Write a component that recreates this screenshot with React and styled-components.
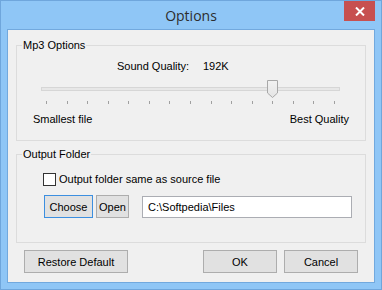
import styled, { createGlobalStyle } from "styled-components";

const Global = createGlobalStyle`
  html, body { margin: 0; padding: 0; background: #8fc6f6; }
  body { font-family: "Segoe UI", "Liberation Sans", Arial, sans-serif; }
`;

const Window = styled.div`
  width: 382px;
  height: 290px;
  box-sizing: border-box;
  background: #8fc6f6;
  border: 1px solid #6fa6dc;
  display: flex;
  flex-direction: column;
  padding: 0 6px 6px;
  overflow: hidden;
`;

const TitleBar = styled.div`
  height: 28px;
  display: flex;
  align-items: center;
  justify-content: center;
  position: relative;
  font-family: "Open Sans", "Noto Sans", sans-serif;
  font-size: 14px;
  color: #2d2d2d;
`;

const CloseBtn = styled.div`
  position: absolute;
  top: 0;
  right: 0;
  width: 31px;
  height: 20px;
  background: #c75050;
  display: flex;
  align-items: center;
  justify-content: center;
`;

const Client = styled.div`
  flex: 1;
  background: #f0f0f0;
  border: 1px solid #72a9de;
  padding: 7px 8px 0;
  display: flex;
  flex-direction: column;
  font-family: "Liberation Sans", Arial, sans-serif;
  font-size: 11px;
  color: #000;
`;

const Group = styled.fieldset`
  margin: ${(p) => p.$top || 0}px 0 0;
  padding: 0 0 ${(p) => p.$bottom || 0}px;
  border: 1px solid #dcdcdc;
  min-width: 0;
`;

const Legend = styled.legend`
  margin-left: 5px;
  padding: 0 1px;
  line-height: 16px;
`;

const QualityRow = styled.div`
  display: flex;
  line-height: 16px;
  margin-top: 5px;
  padding-left: 100px;
`;

const QualityLabel = styled.span`
  width: 86px;
`;

const Slider = styled.div`
  position: relative;
  margin: 6px 25px 0 24px;
  height: 24px;
`;

const Track = styled.div`
  position: absolute;
  left: 0;
  right: 0;
  top: 7px;
  height: 2px;
  background: #e7e7e7;
  border: 1px solid #d6d6d6;
`;

const Thumb = styled.svg`
  position: absolute;
  top: 0;
  left: ${(p) => p.$left}px;
`;

const Ticks = styled.div`
  position: absolute;
  left: 5px;
  right: 5px;
  top: 21px;
  display: flex;
  justify-content: space-between;
`;

const Tick = styled.span`
  width: 1px;
  height: 3px;
  background: #a0a0a0;
`;

const ScaleLabels = styled.div`
  display: flex;
  justify-content: space-between;
  line-height: 16px;
  margin-top: 7px;
  padding: 0 16px;
`;

const CheckRow = styled.label`
  display: flex;
  align-items: center;
  gap: 3px;
  line-height: 16px;
  margin-top: 9px;
  padding-left: 26px;
`;

const Box = styled.span`
  width: 11px;
  height: 11px;
  border: 1px solid #333;
  background: #fff;
`;

const FolderRow = styled.div`
  display: flex;
  align-items: flex-start;
  margin-top: 8px;
  padding-left: 27px;
`;

const Button = styled.button`
  box-sizing: border-box;
  height: 23px;
  width: ${(p) => p.$w}px;
  margin-left: ${(p) => p.$ml || 0}px;
  padding: 0;
  font: inherit;
  color: #000;
  background: #e1e1e1;
  border: 1px solid ${(p) => (p.$focus ? "#3c8fe0" : "#adadad")};
`;

const PathInput = styled.div`
  box-sizing: border-box;
  height: 22px;
  width: 210px;
  margin: 1px 0 0 13px;
  background: #fff;
  border: 1px solid #abadb3;
  padding: 0 5px;
  line-height: 20px;
`;

const Footer = styled.div`
  display: flex;
  margin-top: 7px;
  padding: 0 8px;
`;

const Spacer = styled.div`
  flex: 1;
`;

export default function App() {
  const ticks = Array.from({ length: 15 });
  return (
    <>
      <Global />
      <Window>
        <TitleBar>
          Options
          <CloseBtn>
            <svg width="10" height="9" viewBox="0 0 10 9">
              <path d="M1 0.5 L9 8.5 M9 0.5 L1 8.5" stroke="#fff" strokeWidth="2" />
            </svg>
          </CloseBtn>
        </TitleBar>
        <Client>
          <Group $bottom={13}>
            <Legend>Mp3 Options</Legend>
            <QualityRow>
              <QualityLabel>Sound Quality:</QualityLabel>
              <span>192K</span>
            </QualityRow>
            <Slider>
              <Track />
              <Thumb $left={226} width="12" height="19" viewBox="0 0 12 19">
                <defs>
                  <linearGradient id="tg" x1="0" y1="0" x2="0" y2="1">
                    <stop offset="0" stopColor="#f2f2f2" />
                    <stop offset="1" stopColor="#e4e4e4" />
                  </linearGradient>
                </defs>
                <path d="M0.5 0.5 H10.5 V13 L5.5 17.5 L0.5 13 Z" fill="url(#tg)" stroke="#a8a8a8" />
              </Thumb>
              <Ticks>
                {ticks.map((_, i) => (
                  <Tick key={i} />
                ))}
              </Ticks>
            </Slider>
            <ScaleLabels>
              <span>Smallest file</span>
              <span>Best Quality</span>
            </ScaleLabels>
          </Group>
          <Group $top={5} $bottom={24}>
            <Legend>Output Folder</Legend>
            <CheckRow>
              <Box />
              Output folder same as source file
            </CheckRow>
            <FolderRow>
              <Button $w={49} $focus>Choose</Button>
              <Button $w={33} $ml={3}>Open</Button>
              <PathInput>C:\Softpedia\Files</PathInput>
            </FolderRow>
          </Group>
          <Footer>
            <Button $w={104}>Restore Default</Button>
            <Spacer />
            <Button $w={74}>OK</Button>
            <Button $w={74} $ml={7}>Cancel</Button>
          </Footer>
        </Client>
      </Window>
    </>
  );
}
